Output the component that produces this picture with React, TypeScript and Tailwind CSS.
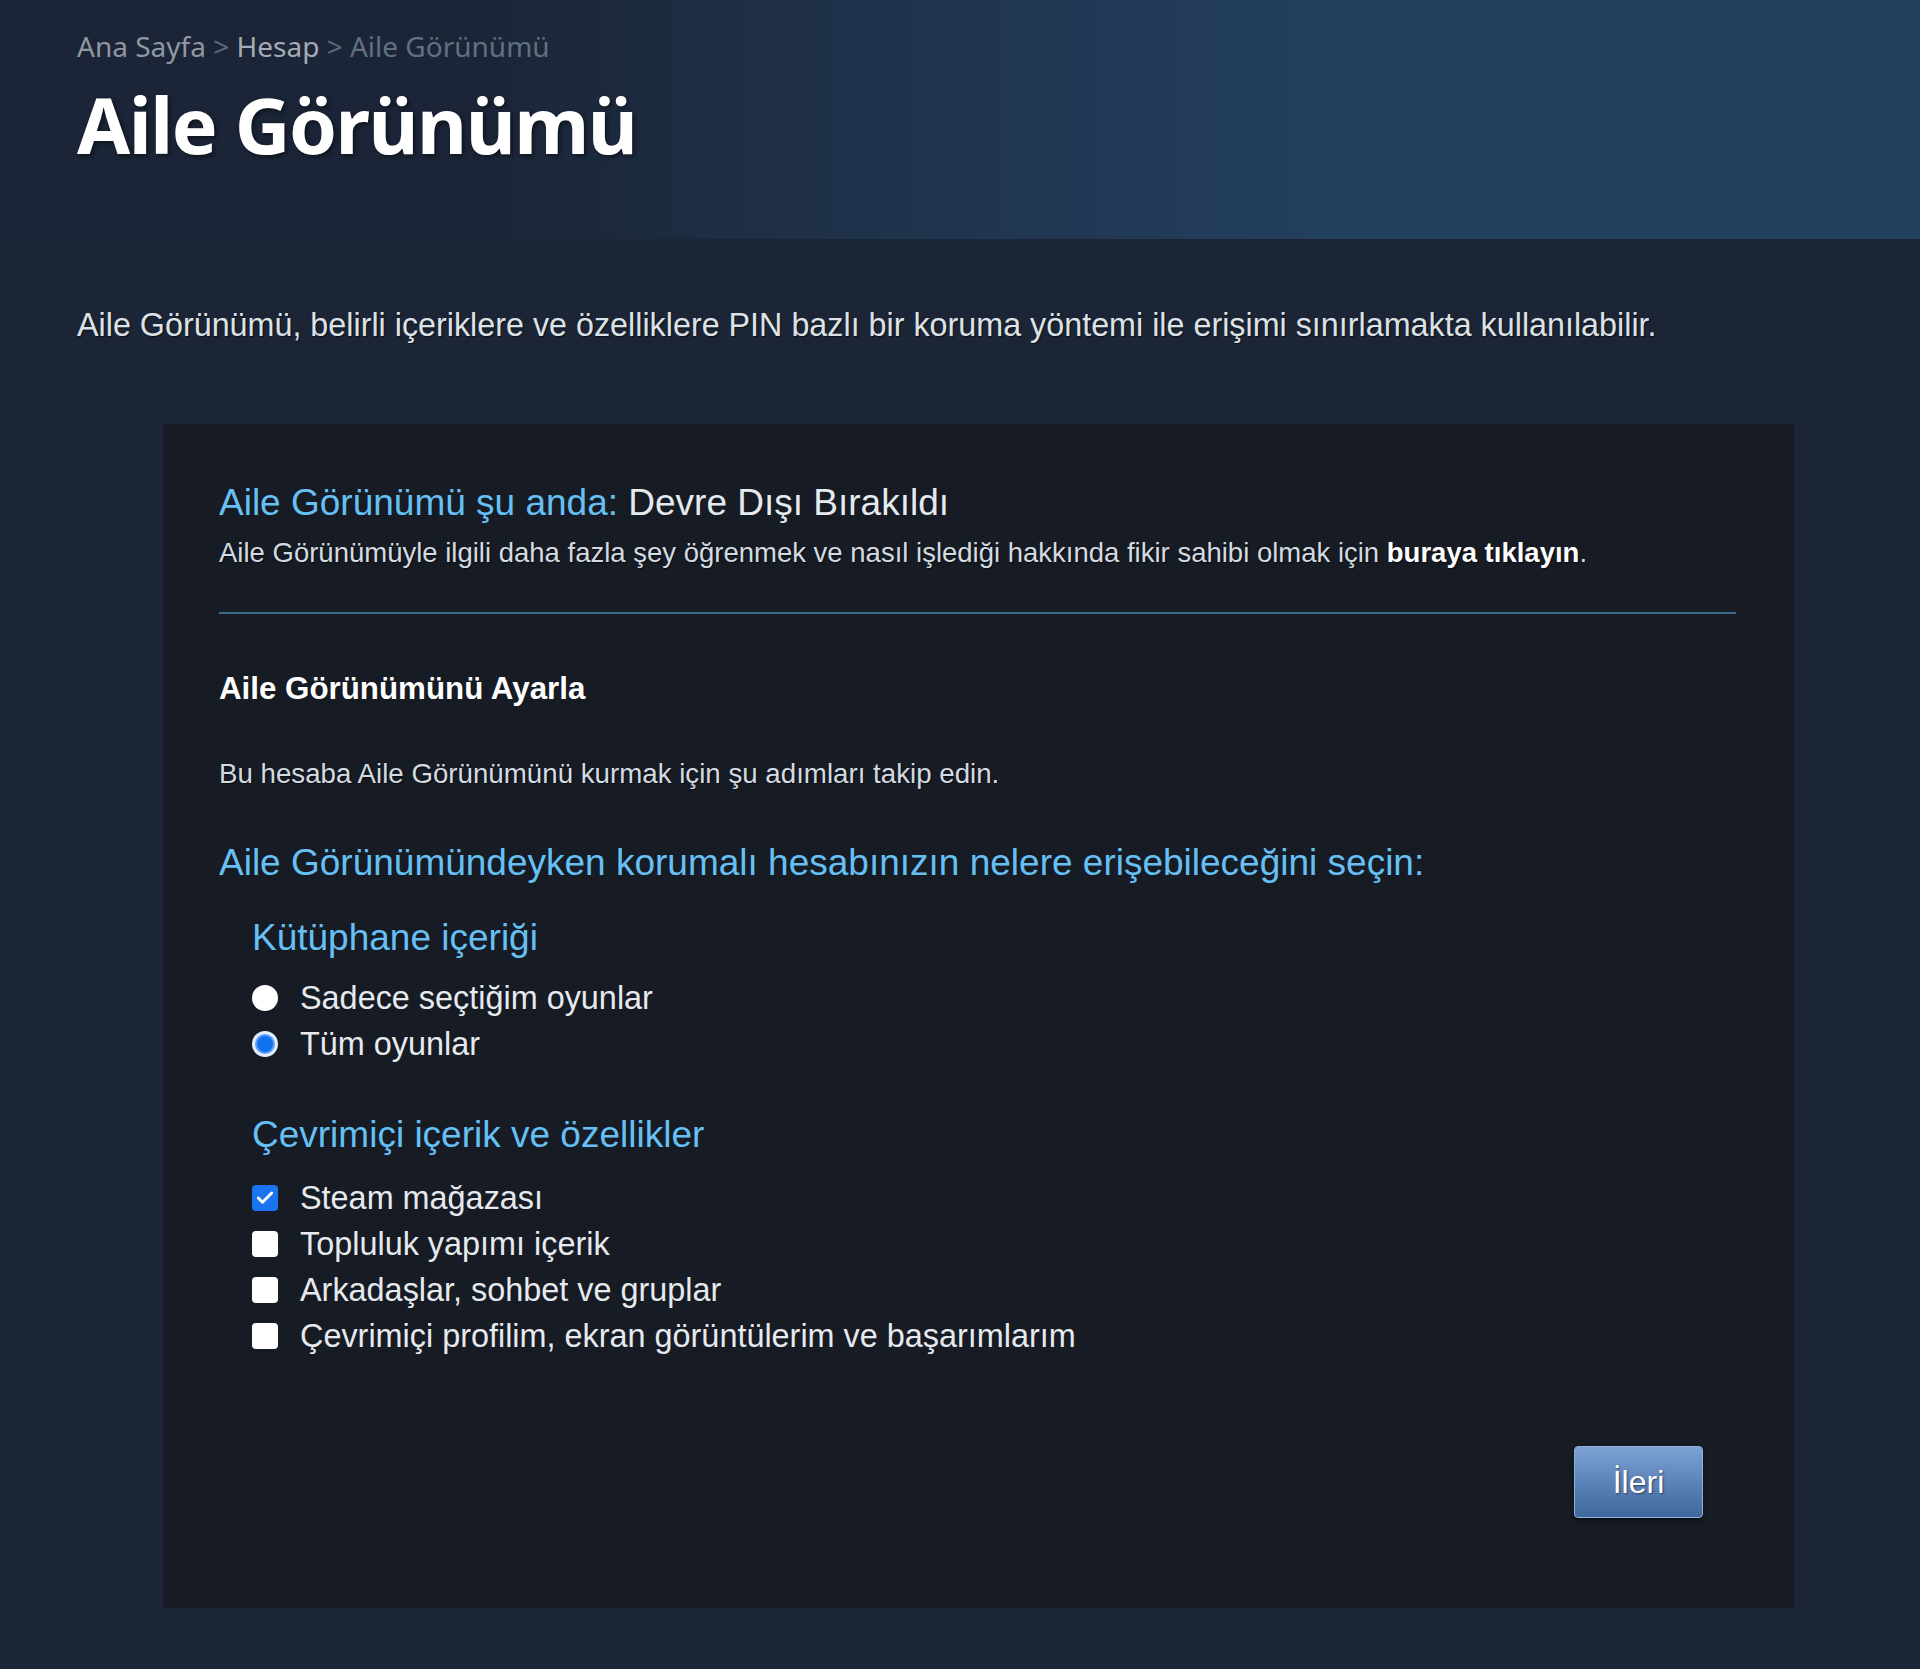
import { Check } from 'lucide-react'

const sans = "font-['Liberation_Sans',Arial,sans-serif]"

const libraryOptions = [
  { label: 'Sadece seçtiğim oyunlar', checked: false },
  { label: 'Tüm oyunlar', checked: true },
]

const onlineOptions = [
  { label: 'Steam mağazası', checked: true },
  { label: 'Topluluk yapımı içerik', checked: false },
  { label: 'Arkadaşlar, sohbet ve gruplar', checked: false },
  { label: 'Çevrimiçi profilim, ekran görüntülerim ve başarımlarım', checked: false },
]

function Radio({ checked }: { checked: boolean }) {
  if (checked) {
    return (
      <span className="w-[26px] h-[26px] rounded-full bg-[#e3eefc] p-[3px] flex-shrink-0">
        <span className="block w-full h-full rounded-full bg-[#1172f0] border-2 border-[#5b9ff5]" />
      </span>
    )
  }
  return <span className="w-[26px] h-[26px] rounded-full bg-white flex-shrink-0" />
}

function Checkbox({ checked }: { checked: boolean }) {
  if (checked) {
    return (
      <span className="w-[26px] h-[26px] rounded-[4px] bg-[#1a74f0] flex items-center justify-center flex-shrink-0">
        <Check className="w-[20px] h-[20px] text-white" strokeWidth={3.5} />
      </span>
    )
  }
  return <span className="w-[26px] h-[26px] rounded-[4px] bg-white flex-shrink-0" />
}

export default function App() {
  return (
    <div className="min-h-[1669px] bg-[#1b2535] pb-[61px]">
      {/* Başlık bandı */}
      <header className="h-[239px] bg-gradient-to-r from-[#1b2537] from-25% via-[#1f324b] via-45% to-[#23405f] to-70% px-[77px] pt-[28px] font-['Noto_Sans',sans-serif]">
        <nav className="text-[28px] leading-[36px] text-[#8f98a0]">
          <span>Ana Sayfa</span>
          <span className="text-[#5d6a78]"> &gt; </span>
          <span className="text-[#a3acb4]">Hesap</span>
          <span className="text-[#5d6a78]"> &gt; </span>
          <span className="text-[#5f7180]">Aile Görünümü</span>
        </nav>
        <h1 className="mt-[15px] text-[77px] leading-[92px] font-bold tracking-[-1.5px] text-white [text-shadow:2px_2px_4px_rgba(0,0,0,0.5)]">
          Aile Görünümü
        </h1>
      </header>

      <p className={`${sans} px-[77px] mt-[70px] text-[32.3px] leading-[32px] text-[#dde2e7] [text-shadow:1px_1px_1px_rgba(0,0,0,0.6)]`}>
        Aile Görünümü, belirli içeriklere ve özelliklere PIN bazlı bir koruma yöntemi ile erişimi sınırlamakta kullanılabilir.
      </p>

      {/* Ayar paneli */}
      <section className={`${sans} ml-[163px] mr-[126px] mt-[83px] bg-[#161b24] pl-[56px] pr-[58px] pt-[57px] pb-[90px]`}>
        <h2 className="text-[37px] leading-[44px] text-[#66c0f4]">
          Aile Görünümü şu anda: <span className="text-[#e5eaee]">Devre Dışı Bırakıldı</span>
        </h2>
        <p className="mt-[12px] text-[27.5px] leading-[32px] text-[#d3dbe2] [text-shadow:1px_1px_1px_rgba(0,0,0,0.6)]">
          Aile Görünümüyle ilgili daha fazla şey öğrenmek ve nasıl işlediği hakkında fikir sahibi olmak için{' '}
          <span className="font-bold text-white">buraya tıklayın</span>.
        </p>

        <div className="mt-[43px] h-[2px] bg-[#3b6a8a]" />

        <h3 className="mt-[55px] text-[31.3px] leading-[40px] font-bold text-white">Aile Görünümünü Ayarla</h3>
        <p className="mt-[49px] text-[27.7px] leading-[32px] text-[#d3dbe2] [text-shadow:1px_1px_1px_rgba(0,0,0,0.6)]">
          Bu hesaba Aile Görünümünü kurmak için şu adımları takip edin.
        </p>

        <h3 className="mt-[51px] text-[37px] leading-[44px] text-[#66c0f4]">
          Aile Görünümündeyken korumalı hesabınızın nelere erişebileceğini seçin:
        </h3>

        <div className="pl-[33px]">
          <h4 className="mt-[31px] text-[37px] leading-[44px] text-[#66c0f4]">Kütüphane içeriği</h4>
          <div className="mt-[15px]">
            {libraryOptions.map((o) => (
              <label key={o.label} className="h-[46px] flex items-center gap-[22px] text-[32.4px] text-[#e6eaee]">
                <Radio checked={o.checked} />
                {o.label}
              </label>
            ))}
          </div>

          <h4 className="mt-[46px] text-[37px] leading-[44px] text-[#66c0f4]">Çevrimiçi içerik ve özellikler</h4>
          <div className="mt-[18px]">
            {onlineOptions.map((o) => (
              <label key={o.label} className="h-[46px] flex items-center gap-[22px] text-[32.4px] text-[#e6eaee]">
                <Checkbox checked={o.checked} />
                {o.label}
              </label>
            ))}
          </div>
        </div>

        <div className="mt-[87px] flex justify-end pr-[33px]">
          <button className="w-[129px] h-[72px] rounded-[4px] border border-[#8fb1de] bg-gradient-to-b from-[#7ca2d4] via-[#5d84ba] to-[#40679b] text-[32px] text-white [text-shadow:1px_1px_2px_rgba(0,0,0,0.5)] shadow-[0_2px_4px_rgba(0,0,0,0.5)]">
            İleri
          </button>
        </div>
      </section>
    </div>
  )
}
